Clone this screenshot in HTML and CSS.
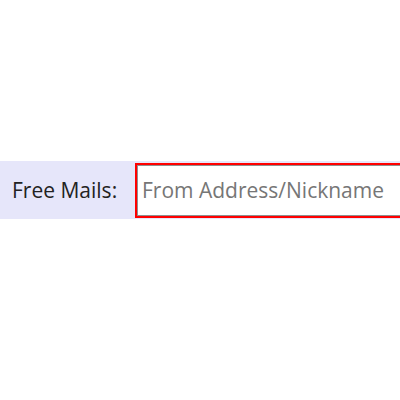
FILE: index.html
```html
<!DOCTYPE html>
<html>
<head>
<meta charset="utf-8">
<link rel="stylesheet" href="styles.css">
</head>
<body>
<div class="page">
  <div class="row">
    <label class="label" for="from">Free Mails:</label>
    <div class="field">
      <input id="from" class="input" type="text" placeholder="From Address/Nickname">
    </div>
  </div>
</div>
</body>
</html>
```

FILE: styles.css
```css
html, body {
  margin: 0;
  padding: 0;
  background: #ffffff;
}
.page {
  width: 400px;
  height: 400px;
  padding-top: 161px;
  box-sizing: border-box;
  overflow: hidden;
}
.row {
  display: flex;
  align-items: center;
  height: 58px;
  background: #e6e6fa;
}
.label {
  font-family: "Open Sans", "Noto Sans", sans-serif;
  font-size: 21px;
  color: #222222;
  padding-left: 12px;
  width: 123px;
  flex: none;
}
.field {
  flex: 1;
  min-width: 0;
  height: 55px;
  background: #ffffff;
  border: 2px solid #ff0000;
  border-right: none;
  box-sizing: border-box;
}
.input {
  display: block;
  width: 100%;
  height: 100%;
  box-sizing: border-box;
  border: 1px solid #8f8f8f;
  border-right: none;
  margin: 0;
  padding: 0 0 0 4px;
  font-family: "Open Sans", "Noto Sans", sans-serif;
  font-size: 21px;
  color: #333333;
  background: #ffffff;
  outline: none;
}
.input::placeholder {
  color: #767676;
}
```
